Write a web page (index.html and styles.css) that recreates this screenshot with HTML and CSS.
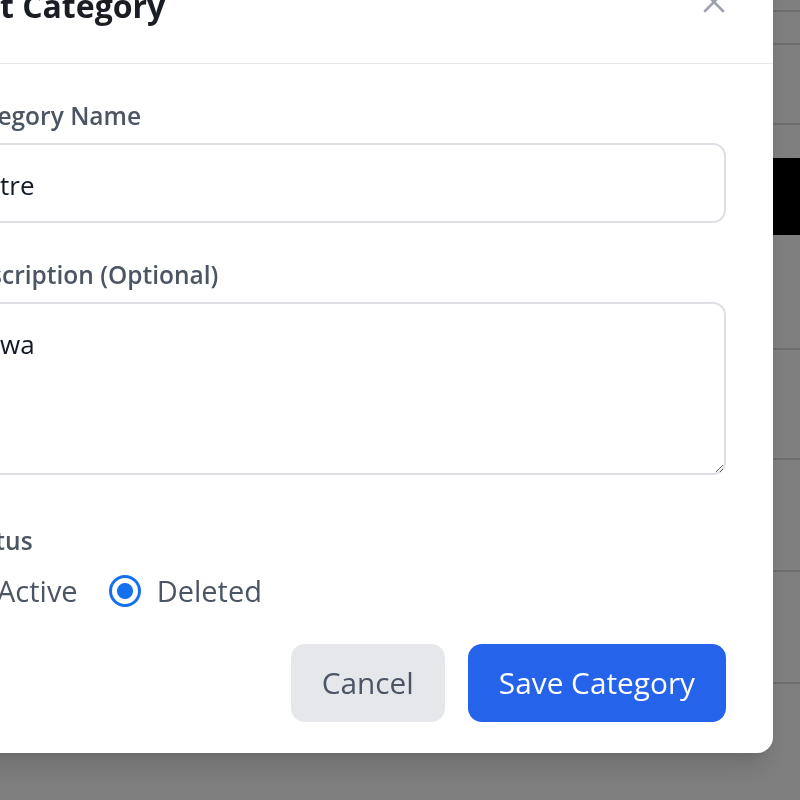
FILE: index.html
```html
<!DOCTYPE html>
<html lang="en">
<head>
<meta charset="utf-8">
<title>Edit Category</title>
<link rel="stylesheet" href="styles.css">
</head>
<body>
<div class="page">
  <div class="bg-row r1"></div>
  <div class="bg-row r2"></div>
  <div class="bg-row r3"></div>
  <div class="bg-row r4 no-line"></div>
  <div class="bg-row band"></div>
  <div class="bg-row r5"></div>
  <div class="bg-row r6"></div>
  <div class="bg-row r7"></div>
  <div class="bg-row r8"></div>
</div>

<div class="overlay">
  <div class="modal">
    <div class="modal-header">
      <h2 class="modal-title">Edit Category</h2>
      <button class="close-btn" type="button" aria-label="Close">
        <svg viewBox="0 0 22 22" width="22" height="22"><path d="M2 2 L20 20 M20 2 L2 20" fill="none" stroke="currentColor" stroke-width="2.6" stroke-linecap="round"/></svg>
      </button>
    </div>
    <form class="modal-body">
      <div class="field field-name">
        <label class="field-label">Category Name</label>
        <input class="text-input" type="text" value="tre">
      </div>
      <div class="field field-desc">
        <label class="field-label">Description (Optional)</label>
        <textarea class="text-area">wa</textarea>
      </div>
      <div class="field field-status">
        <span class="field-label">Status</span>
        <div class="radio-row">
          <label class="radio-option"><input class="radio" type="radio" name="status"> Active</label>
          <label class="radio-option"><input class="radio" type="radio" name="status" checked> Deleted</label>
        </div>
      </div>
      <div class="modal-footer">
        <button class="btn btn-cancel" type="button">Cancel</button>
        <button class="btn btn-save" type="button">Save Category</button>
      </div>
    </form>
  </div>
</div>
</body>
</html>
```

FILE: styles.css
```css
html, body {
  margin: 0;
  padding: 0;
  height: 100%;
  overflow: hidden;
}

body {
  font-family: "Open Sans", "Noto Sans", sans-serif;
  background: #ffffff;
}

/* background page, dimmed by overlay */
.page {
  display: flex;
  flex-direction: column;
}

.bg-row {
  box-sizing: border-box;
  border-bottom: 2px solid #dadada;
}
.bg-row.no-line { border-bottom: none; }
.r1 { height: 12px; }
.r2 { height: 33px; }
.r3 { height: 80px; }
.r4 { height: 33px; }
.band { height: 77px; background: #000; border-bottom: none; }
.r5 { height: 115px; }
.r6 { height: 110px; }
.r7 { height: 112px; }
.r8 { height: 112px; }

/* overlay */
.overlay {
  position: fixed;
  inset: 0;
  background: rgba(0, 0, 0, 0.5);
  display: flex;
  justify-content: flex-end;
  align-items: flex-start;
  padding-right: 27px;
  overflow: hidden;
}

.modal {
  flex-shrink: 0;
  width: 862px;
  margin-top: -51px;
  background: #ffffff;
  border-radius: 16px;
  box-shadow: 0 20px 25px -5px rgba(0, 0, 0, 0.12), 0 8px 10px -6px rgba(0, 0, 0, 0.1);
}

.modal-header {
  display: flex;
  justify-content: space-between;
  align-items: flex-start;
  padding: 37px 47px;
  border-bottom: 1px solid #e5e7eb;
}

.modal-title {
  margin: 0 0 0 -6px;
  font-size: 32px;
  line-height: 40px;
  font-weight: 700;
  color: #1a1d23;
}

.close-btn {
  display: flex;
  margin-top: 5px;
  margin-right: 1px;
  padding: 0;
  border: none;
  background: none;
  color: #9ca3af;
}

.modal-body {
  padding: 37px 47px 31px;
}

.field-name { margin-bottom: 37px; }
.field-desc { margin-bottom: 51px; }

.field-label {
  display: block;
  margin-bottom: 12px;
  font-size: 24.5px;
  line-height: 30px;
  font-weight: 600;
  color: #4b5563;
}

.text-input,
.text-area {
  display: block;
  width: 100%;
  box-sizing: border-box;
  margin: 0;
  padding: 24px 20px 20px 40px;
  border: 2px solid #dcdfe4;
  border-radius: 13px;
  font-family: inherit;
  font-size: 26px;
  line-height: 32px;
  color: #111827;
  background: #fff;
  outline: none;
}

.text-input { height: 80px; }

.text-area {
  height: 173px;
  resize: vertical;
}

.radio-row {
  display: flex;
  align-items: center;
  gap: 31px;
  margin: 15px 0 0 -9px;
}

.radio-option {
  display: flex;
  align-items: center;
  gap: 16px;
  font-size: 29px;
  line-height: 40px;
  color: #4b5563;
}

.radio {
  appearance: none;
  -webkit-appearance: none;
  width: 32px;
  height: 32px;
  margin: 0;
  box-sizing: border-box;
  border-radius: 50%;
  border: 2px solid #767676;
  background: #fff;
}

.radio:checked {
  border: 3px solid #1570ef;
  background: radial-gradient(circle, #1570ef 0 7.5px, #ffffff 8.5px);
}

.modal-footer {
  display: flex;
  justify-content: flex-end;
  gap: 23px;
  margin-top: 33px;
}

.btn {
  height: 78px;
  padding: 0 31px;
  border: none;
  border-radius: 14px;
  font-family: inherit;
  font-size: 29.8px;
  line-height: 40px;
}

.btn-cancel {
  background: #e5e7eb;
  color: #4b5563;
}

.btn-save {
  background: #2563eb;
  color: #ffffff;
}
```
